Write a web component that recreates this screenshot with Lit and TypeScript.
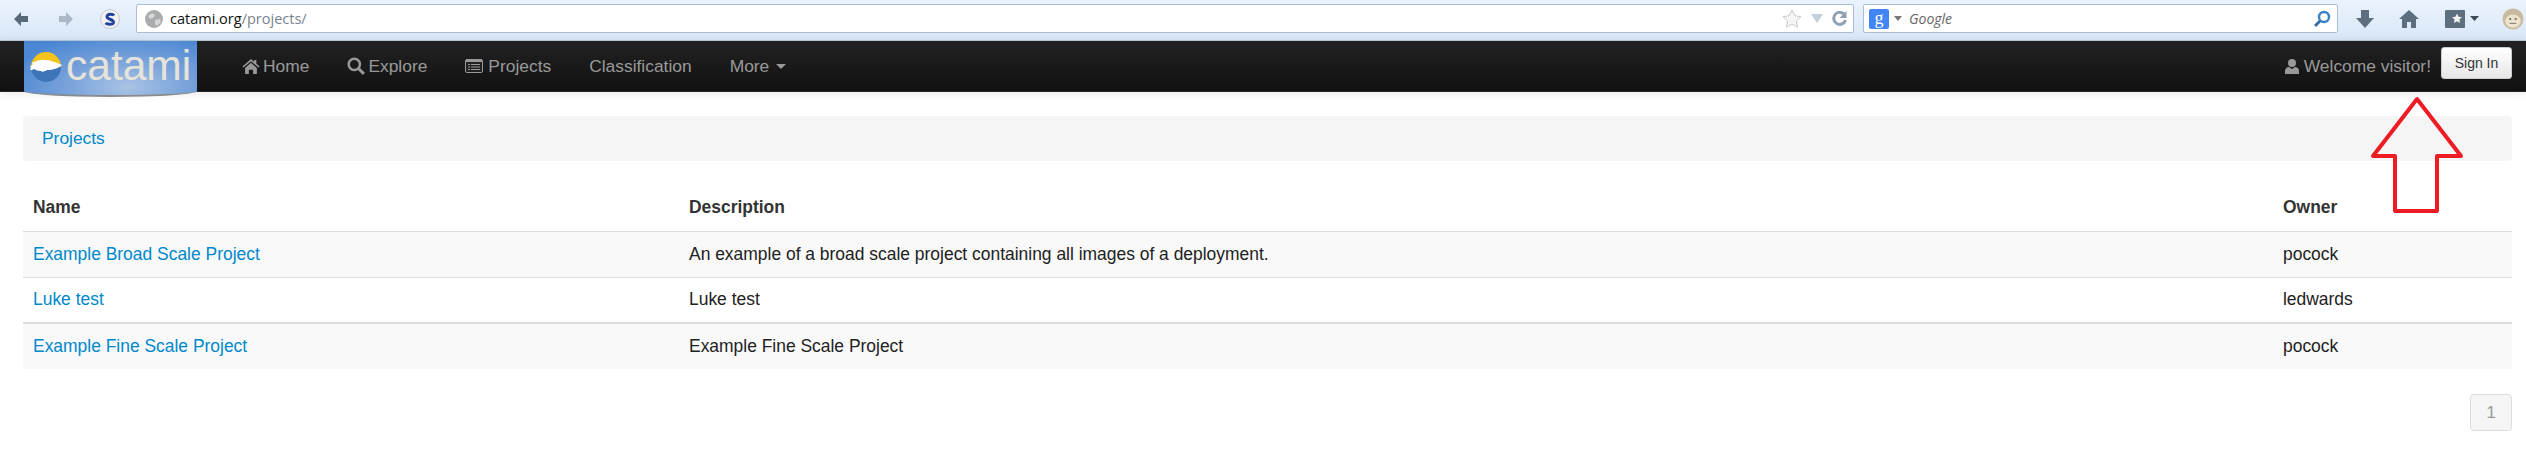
import { LitElement, html, css, svg } from "lit";
import { customElement } from "lit/decorators.js";

const rows = [
  ["Example Broad Scale Project", "An example of a broad scale project containing all images of a deployment.", "pocock"],
  ["Luke test", "Luke test", "ledwards"],
  ["Example Fine Scale Project", "Example Fine Scale Project", "pocock"],
];

@customElement("app-root")
export class AppRoot extends LitElement {
  static styles = css`
    :host { display: block; width: 2526px; height: 456px; position: relative; overflow: hidden; background: #fff; font-family: "Liberation Sans", Arial, sans-serif; font-size: 17.4px; color: #222; }
    svg { display: block; flex: none; }
    .toolbar { height: 40px; display: flex; align-items: center; background: linear-gradient(#eaf3fd, #d9e7f7); border-bottom: 1px solid #b9cbdc; padding-left: 13px; box-sizing: content-box; }
    .tb-back { margin-right: 29px; }
    .tb-fwd { margin-right: 26px; }
    .tb-s { margin-right: 16px; }
    .urlbar { width: 1718px; height: 29px; margin-top: -3px; box-sizing: border-box; border: 1px solid #a9bdd3; border-radius: 2px; background: #fff; display: flex; align-items: center; padding: 0 6px 0 8px; font-family: "Open Sans", sans-serif; font-size: 14.5px; }
    .urlbar .host { color: #111; margin-left: 7px; }
    .urlbar .path { color: #76838f; flex: 1; }
    .urlbar .ic { margin-left: 9px; }
    .search { width: 475px; margin-left: 9px; height: 29px; margin-top: -3px; box-sizing: border-box; border: 1px solid #a9bdd3; border-radius: 2px; background: #fff; display: flex; align-items: center; padding: 0 6px 0 5px; font-family: "Open Sans", sans-serif; font-style: italic; font-size: 14px; color: #666; }
    .search .g { width: 20px; height: 20px; background: #4285f4; color: #fff; border-radius: 2px; font: 18px/18px "Liberation Serif", serif; text-align: center; }
    .search .q { flex: 1; margin-left: 7px; }
    .tb-right { display: flex; align-items: center; margin-top: -3px; }
    .nav { height: 50px; background: linear-gradient(#222, #111); border-bottom: 1px solid #252525; display: flex; align-items: center; box-shadow: 0 1px 10px rgba(0,0,0,.1); box-sizing: content-box; padding-left: 24px; color: #999; font-size: 17.4px; }
    .logo { position: absolute; left: 24px; top: 41px; width: 173px; height: 56px; border-radius: 0 0 50% 50% / 0 0 6px 6px; background: radial-gradient(ellipse at 60% 85%, #a9c3e5 0, #7aa3da 40%, #4a86d3 85%); border-bottom: 2px solid #8a8a8c; box-sizing: border-box; display: flex; align-items: center; padding-left: 6px; color: #e6e4da; font-size: 42.5px; }
    .logo span { margin-left: 4px; margin-top: -5px; line-height: 42px; }
    .logo svg { margin-top: -2px; }
    .navlinks { display: flex; margin-left: 218px; }
    .navlinks a { display: flex; align-items: center; gap: 3px; white-space: nowrap; margin-right: 38px; }
    .navlinks .wide { margin-right: 2px; }
    .caret { width: 0; height: 0; border: 5px solid transparent; border-top-color: #999; border-bottom: 0; margin-left: 4px; }
    .right { margin-left: auto; display: flex; align-items: center; margin-right: 14px; }
    .welcome { display: flex; align-items: center; gap: 5px; margin-right: 10px; }
    .signin { width: 71px; height: 32px; box-sizing: border-box; margin-top: -6px; background: linear-gradient(#fff, #e6e6e6); border: 1px solid #ccc; border-radius: 3px; color: #333; font-size: 14px; display: flex; align-items: center; justify-content: center; }
    main { padding: 24px 14px 0 23px; }
    .crumb { height: 45px; background: #f5f5f5; border-radius: 4px; display: flex; align-items: center; padding-left: 19px; color: #0088cc; }
    table { border-collapse: collapse; width: 2489px; margin-top: 23px; table-layout: fixed; font-size: 17.45px; }
    th, td { padding: 0 0 0 10px; text-align: left; height: 46px; box-sizing: border-box; }
    th { height: 47px; font-weight: 700; color: #333; padding-top: 1px; }
    td { border-top: 1px solid #ddd; color: #222; }
    tr.odd td { background: #f9f9f9; }
    tr.thick td { border-top: 2px solid #ddd; }
    td a { color: #0088cc; }
    .c1 { width: 656px; } .c2 { width: 1594px; }
    .pager { display: flex; justify-content: flex-end; margin-top: 25px; }
    .pager div { width: 42px; height: 37px; box-sizing: border-box; background: #f5f5f5; border: 1px solid #ddd; border-radius: 4px; color: #999; display: flex; align-items: center; justify-content: center; }
    .arrow { position: absolute; left: 2370px; top: 96px; }
    .lift { margin-top: -3px; }
    .m-caret { margin-left: 5px; }
    .m-dl { margin-left: 18px; }
    .m-home { margin-left: 25px; }
    .m-bm { margin-left: 25px; }
    .m-bmc { margin-left: 4px; }
    .m-mk { margin-left: 23px; }
  `;

  render() {
    return html`
      <div class="toolbar">
        <svg class="tb-back lift" width="16" height="16" viewBox="0 0 16 16"><path d="M8 1 1 8l7 7v-4h7V5H8z" fill="#58697a"/></svg>
        <svg class="tb-fwd lift" width="16" height="16" viewBox="0 0 16 16"><path d="M8 1l7 7-7 7v-4H1V5h7z" fill="#aab8c6"/></svg>
        <svg class="tb-s lift" width="20" height="20" viewBox="0 0 20 20"><circle cx="10" cy="10" r="9.5" fill="#f2f2f4" stroke="#c4c8d0"/><path d="M14 6.5C13 5 7.5 4.500 7 7.500s7 2.500 6.500 6c-.5 2.500-6.500 2-8 .5" fill="none" stroke="#22439a" stroke-width="3"/></svg>
        <div class="urlbar">
          <svg width="18" height="18" viewBox="0 0 18 18"><circle cx="9" cy="9" r="9" fill="#a9abad"/><path d="M3 6l4-3 3 2-2 3-3 1zM10 10l5-1 1 3-4 4-2-2z" fill="#d4d6d8"/></svg>
          <span class="host">catami.org</span><span class="path">/projects/</span>
          <svg class="ic" width="20" height="20" viewBox="0 0 20 20"><path d="M10 1l2.700 5.800 6.300.8-4.600 4.300 1.200 6.200L10 15l-5.600 3.100 1.200-6.200L1 7.600l6.300-.8z" fill="#f6f6f6" stroke="#c5c9cc"/></svg>
          <svg class="ic" width="12" height="9" viewBox="0 0 12 9"><path d="M0 0h12L6 9z" fill="#c3cfda"/></svg>
          <svg class="ic" width="15" height="15" viewBox="0 0 15 15"><path d="M13 4.500A6 6 0 1 0 13.500 9" fill="none" stroke="#8fa1b1" stroke-width="3"/><path d="M14.500 0v7h-7z" fill="#8fa1b1"/></svg>
        </div>
        <div class="search">
          <div class="g">g</div>
          <svg class="m-caret" width="8" height="5" viewBox="0 0 8 5"><path d="M0 0h8L4 5z" fill="#777"/></svg>
          <span class="q">Google</span>
          <svg width="18" height="18" viewBox="0 0 18 18"><circle cx="11" cy="7" r="5" fill="none" stroke="#3b82c4" stroke-width="2.400"/><path d="M7 11l-5 5" stroke="#3b6ea5" stroke-width="3"/></svg>
        </div>
        <div class="tb-right">
          <svg class="m-dl" width="18" height="18" viewBox="0 0 18 18"><path d="M5 0h8v8h5l-9 10L0 8h5z" fill="#5d6e7f"/></svg>
          <svg class="m-home" width="20" height="18" viewBox="0 0 20 18"><path d="M10 0 0 9h3v9h5v-6h4v6h5V9h3z" fill="#5d6e7f"/></svg>
          <svg class="m-bm" width="22" height="18" viewBox="0 0 20 18"><rect width="20" height="18" rx="1" fill="#5d6e7f"/><path d="M12 3.500l1.500 3.300 3.500.4-2.600 2.400.7 3.400-3.100-1.700-3.100 1.700.7-3.400L7 7.200l3.500-.4z" fill="#f1f3f5"/></svg>
          <svg class="m-bmc" width="9" height="5" viewBox="0 0 9 5"><path d="M0 0h9L4.500 5z" fill="#3c4a56"/></svg>
          <svg class="m-mk" width="22" height="22" viewBox="0 0 20 20"><circle cx="10" cy="10" r="9.500" fill="#c9b99f"/><ellipse cx="10" cy="12" rx="7" ry="6" fill="#ece3cf"/><circle cx="7.500" cy="10" r="1" fill="#6f6350"/><circle cx="12.500" cy="10" r="1" fill="#6f6350"/><path d="M7 14h6" stroke="#8d8069"/></svg>
        </div>
      </div>
      <div class="nav">
        <div class="navlinks">
          <a><svg width="18" height="15" viewBox="0 0 16 14"><path d="M8 0 0 7l1 1 7-6 7 6 1-1-3-2.700V1h-2v1.500zM2.500 8.500V14H6v-4h4v4h3.500V8.500L8 3.500z" fill="#999"/></svg>Home</a>
          <a><svg width="18" height="18" viewBox="0 0 16 16"><circle cx="6.500" cy="6.500" r="5" fill="none" stroke="#999" stroke-width="2.200"/><path d="M10 10l5 5" stroke="#999" stroke-width="2.600"/></svg>Explore</a>
          <a><svg class="wide" width="18" height="14" viewBox="0 0 18 14"><rect x="0.500" y="0.500" width="17" height="13" rx="1.500" fill="#222" stroke="#999"/><path d="M1 1h16v2H1z" fill="#999"/><path d="M3 5.500h2M6 5.500h9M3 8h2M6 8h9M3 10.500h2M6 10.500h9" stroke="#999"/></svg>Projects</a>
          <a>Classification</a>
          <a>More <span class="caret"></span></a>
        </div>
        <div class="right">
          <span class="welcome"><svg width="14" height="15" viewBox="0 0 14 15"><circle cx="7" cy="4" r="4" fill="#999"/><path d="M0 15v-3c0-2.500 2-4 4-4l3 2 3-2c2 0 4 1.500 4 4v3z" fill="#999"/></svg>Welcome visitor!</span>
          <span class="signin">Sign In</span>
        </div>
      </div>
      <div class="logo">
        <svg width="32" height="32" viewBox="0 0 32 32">
          <path d="M1 16a15 15 0 0 1 30 0z" fill="#f6c21c"/><path d="M1 16a15 15 0 0 0 30 0z" fill="#3d75b8"/>
          <path d="M0 15c4-1 3-3 1-3 5-1 8-4 14-3 5 0 10 2 17 5-3 3-9 5-15 5-3 2-5 2-6 1-3 0-5-1-7-2-1 1-3 1-4 1 1-1 1-3 0-4z" fill="#fff"/>
        </svg>
        <span>catami</span>
      </div>
      <main>
        <div class="crumb">Projects</div>
        <table>
          <thead><tr><th class="c1">Name</th><th class="c2">Description</th><th>Owner</th></tr></thead>
          <tbody>
            ${rows.map((r, i) => html`
              <tr class="${i % 2 === 0 ? "odd" : ""} ${i === 2 ? "thick" : ""}">
                <td><a>${r[0]}</a></td><td>${r[1]}</td><td>${r[2]}</td>
              </tr>`)}
          </tbody>
        </table>
        <div class="pager"><div>1</div></div>
      </main>
      <svg class="arrow" width="94" height="118" viewBox="0 0 94 118">
        ${svg`<path d="M47 3 3 60h22v55h42V60h24z" fill="none" stroke="#ed1c24" stroke-width="4" stroke-linejoin="round"/>`}
      </svg>
    `;
  }
}
